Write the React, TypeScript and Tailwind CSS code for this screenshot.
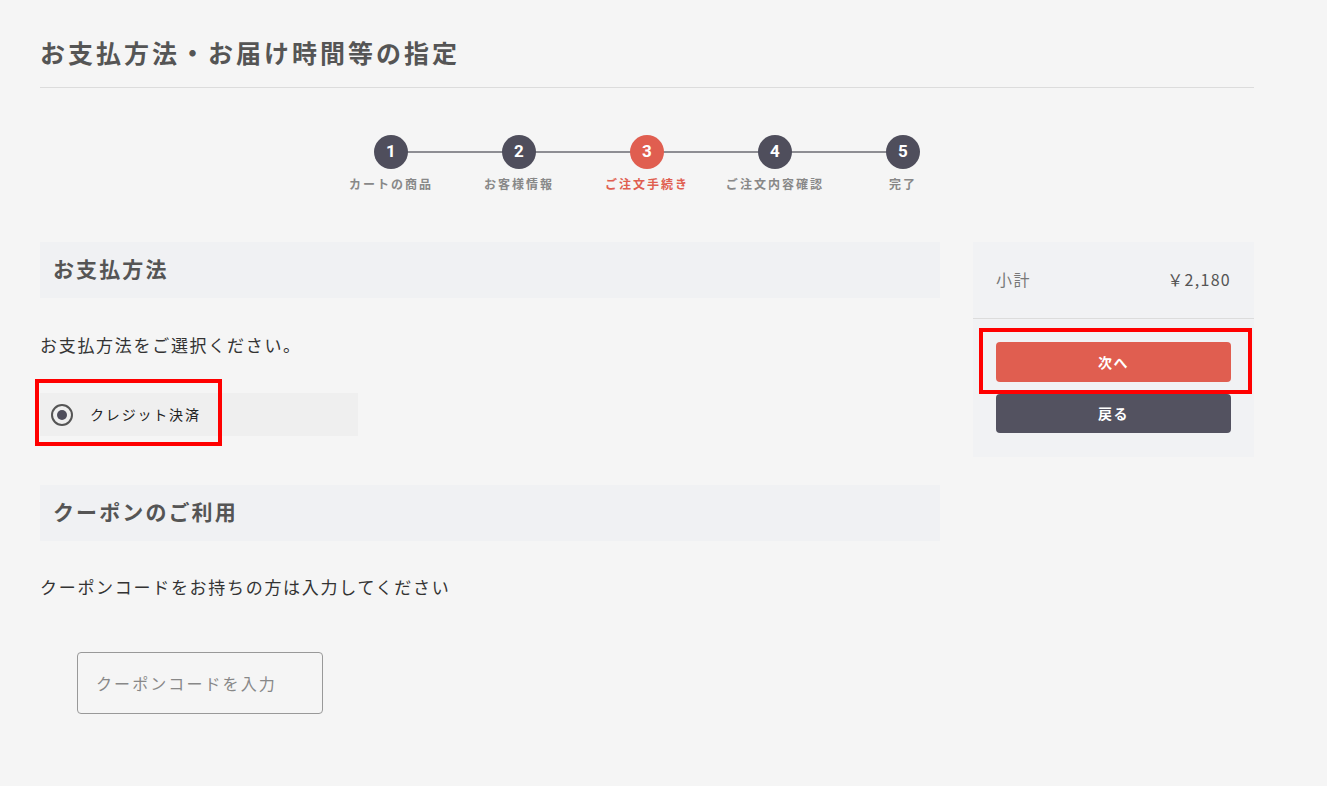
import React from 'react';

const steps = [
  { no: 1, label: 'カートの商品' },
  { no: 2, label: 'お客様情報' },
  { no: 3, label: 'ご注文手続き', active: true },
  { no: 4, label: 'ご注文内容確認' },
  { no: 5, label: '完了' },
];

const font = { fontFamily: '"Noto Sans CJK JP", "Noto Sans", sans-serif' };

function SectionHeading({ children }: { children: React.ReactNode }) {
  return (
    <div className="h-[56px] bg-[#f0f1f3] px-[13px] pb-[3px] flex items-center">
      <h2 className="text-[21px] font-bold text-[#555] tracking-[0.1em]">{children}</h2>
    </div>
  );
}

export default function App() {
  return (
    <div className="min-h-screen bg-[#f5f5f5] text-[#333]" style={font}>
      <div className="w-[1214px] ml-[40px] pt-[34px]">
        {/* Title */}
        <div className="border-b border-[#dcdcdc] pb-[16px]">
          <h1 className="text-[25px] leading-[37px] font-bold text-[#555] tracking-[0.12em]">
            お支払方法・お届け時間等の指定
          </h1>
        </div>

        {/* Steps */}
        <div className="flex justify-center mt-[47px]">
          <div className="relative grid grid-cols-5 w-[640px]">
            <div className="absolute left-[64px] right-[64px] top-[16px] h-[2px] bg-[#8e8e93]" />
            {steps.map(s => (
              <div key={s.no} className="relative flex flex-col items-center">
                <div
                  className={`w-[34px] h-[34px] rounded-full flex items-center justify-center text-white text-[17px] font-bold ${
                    s.active ? 'bg-[#e05e50]' : 'bg-[#4f4e5c]'
                  }`}
                  style={{ fontFamily: 'Roboto, "Noto Sans", sans-serif' }}
                >
                  {s.no}
                </div>
                <div
                  className={`mt-[6px] text-[12px] leading-[18px] font-bold tracking-[0.17em] ${
                    s.active ? 'text-[#e05e50]' : 'text-[#888]'
                  }`}
                >
                  {s.label}
                </div>
              </div>
            ))}
          </div>
        </div>

        {/* Main */}
        <div className="flex gap-[33px] mt-[49px]">
          <div className="w-[900px]">
            <SectionHeading>お支払方法</SectionHeading>
            <p className="mt-[35px] text-[17px] leading-[24px] tracking-[0.1em]">お支払方法をご選択ください。</p>

            <div className="relative mt-[36px] w-[318px] h-[43px] bg-[#efefef] flex items-center pl-[11px]">
              <span className="w-[22px] h-[22px] rounded-full border-2 border-[#555] flex items-center justify-center">
                <span className="w-[10px] h-[10px] rounded-full bg-[#4f4e5c]" />
              </span>
              <span className="ml-[17px] text-[14px] tracking-[0.13em] text-[#222]">クレジット決済</span>
              <div className="absolute left-[-5px] top-[-14px] w-[187px] h-[67px] border-4 border-[#ff0000]" />
            </div>

            <div className="mt-[49px]">
              <SectionHeading>クーポンのご利用</SectionHeading>
            </div>
            <p className="mt-[34px] text-[17px] leading-[24px] tracking-[0.1em]">
              クーポンコードをお持ちの方は入力してください
            </p>
            <input
              type="text"
              placeholder="クーポンコードを入力"
              className="mt-[53px] ml-[37px] w-[246px] h-[62px] border border-[#999] rounded-[4px] bg-transparent px-[18px] text-[16px] tracking-[0.13em] placeholder:text-[#888] outline-none"
            />
          </div>

          {/* Summary */}
          <div className="w-[281px] self-start bg-[#f1f2f4]">
            <div className="h-[77px] flex items-center justify-between px-[23px] pb-[2px] border-b border-[#dcdcdc]">
              <span className="text-[16px] text-[#777] tracking-[0.1em]">小計</span>
              <span className="text-[16px] text-[#555] tracking-[0.08em]">￥2,180</span>
            </div>
            <div className="px-[23px] pt-[23px] pb-[24px] flex flex-col gap-[12px]">
              <div className="relative">
                <button className="w-full h-[40px] rounded-[4px] bg-[#e05e50] text-white text-[14px] font-bold tracking-[0.1em]">
                  次へ
                </button>
                <div className="absolute left-[-17px] top-[-14px] w-[273px] h-[66px] border-4 border-[#ff0000]" />
              </div>
              <button className="w-full h-[39px] rounded-[4px] bg-[#535260] text-white text-[14px] font-bold tracking-[0.1em]">
                戻る
              </button>
            </div>
          </div>
        </div>
      </div>
    </div>
  );
}
